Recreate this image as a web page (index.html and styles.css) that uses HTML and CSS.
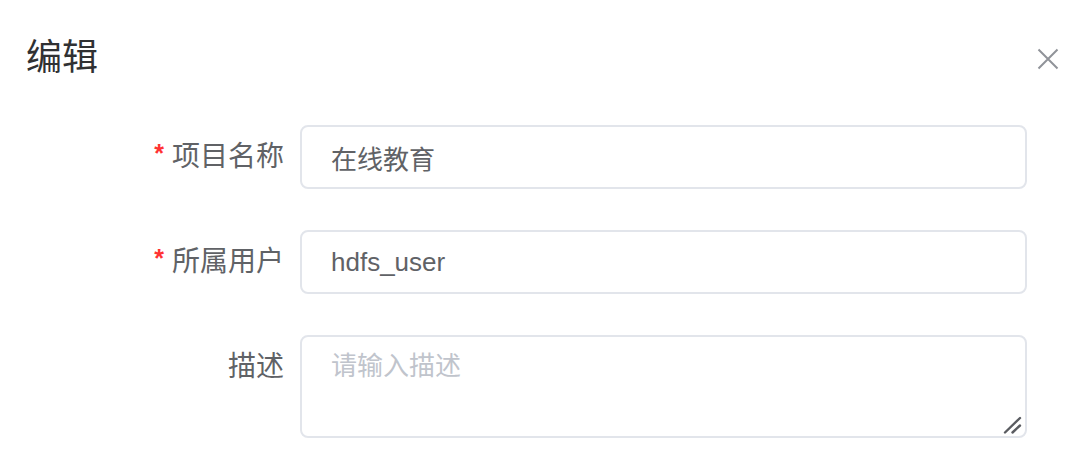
FILE: index.html
```html
<!DOCTYPE html>
<html lang="zh-CN">
<head>
<meta charset="utf-8">
<title>编辑</title>
<link rel="stylesheet" href="styles.css">
</head>
<body>
<div class="dialog">
  <div class="dialog-header">
    <span class="dialog-title">编辑</span>
    <button class="dialog-close" aria-label="关闭">
      <svg width="22" height="22" viewBox="0 0 22 22"><path d="M1.5 1.5 L20.5 20.5 M20.5 1.5 L1.5 20.5" stroke="#909399" stroke-width="2" fill="none"/></svg>
    </button>
  </div>
  <form class="form">
    <div class="form-item">
      <label class="form-label required">项目名称</label>
      <div class="form-control"><input class="input" type="text" value="在线教育"></div>
    </div>
    <div class="form-item">
      <label class="form-label required">所属用户</label>
      <div class="form-control"><input class="input" type="text" value="hdfs_user"></div>
    </div>
    <div class="form-item">
      <label class="form-label">描述</label>
      <div class="form-control textarea-wrap">
        <textarea class="textarea" placeholder="请输入描述"></textarea>
        <svg class="resize-handle" width="20" height="18" viewBox="0 0 20 18"><path d="M2 16.5 L17 2 M9.5 16.5 L17 9.5" stroke="#5a5c61" stroke-width="2.4" stroke-linecap="round" fill="none"/></svg>
      </div>
    </div>
  </form>
</div>
</body>
</html>
```
FILE: styles.css
```css
* { box-sizing: border-box; }
html, body { margin: 0; padding: 0; background: #fff; }
body {
  font-family: "Liberation Sans", Arial, "Noto Sans CJK SC", sans-serif;
  width: 1080px;
  height: 457px;
  overflow: hidden;
}
.dialog { width: 1080px; }
.dialog-header {
  display: flex;
  justify-content: space-between;
  align-items: center;
  padding: 40px 21px 0 26px;
  height: 76px;
}
.dialog-title {
  font-size: 36px;
  line-height: 36px;
  color: #303133;
}
.dialog-close {
  border: 0;
  background: none;
  padding: 0;
  width: 22px;
  height: 22px;
  display: flex;
  margin-top: 1px;
}
.form {
  margin-top: 49px;
  padding-right: 53px;
}
.form-item {
  display: flex;
  margin-bottom: 41px;
}
.form-label {
  width: 300px;
  flex: none;
  padding-right: 16px;
  text-align: right;
  font-size: 28px;
  line-height: 64px;
  color: #606266;
}
.form-label.required::before {
  content: "*";
  display: inline-block;
  font-size: 25px;
  font-weight: bold;
  color: #f33;
  margin-right: 8px;
  vertical-align: top;
  line-height: 56px;
}
.form-control { flex: 1; }
.input {
  width: 100%;
  height: 64px;
  border: 2px solid #e2e5eb;
  border-radius: 8px;
  padding: 0 29px;
  font-family: inherit;
  font-size: 26px;
  color: #606266;
  outline: none;
  background: #fff;
}
.textarea-wrap { position: relative; }
.textarea {
  display: block;
  width: 100%;
  height: 103px;
  border: 2px solid #e2e5eb;
  border-radius: 8px;
  padding: 10px 29px;
  font-family: inherit;
  font-size: 26px;
  line-height: 1.5;
  color: #606266;
  resize: none;
  outline: none;
}
.textarea::placeholder { color: #c0c4cc; }
.resize-handle {
  position: absolute;
  right: 4px;
  bottom: 4px;
}
```
